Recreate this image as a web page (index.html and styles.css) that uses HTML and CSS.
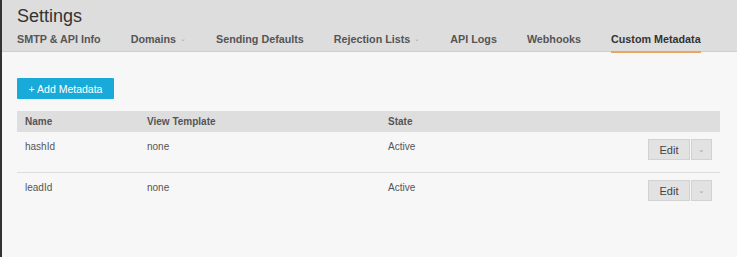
FILE: index.html
```html
<!DOCTYPE html>
<html lang="en">
<head>
    <meta charset="UTF-8">
    <title>Settings</title>
    <link rel="stylesheet" href="styles.css">
</head>
<body>
    <div class="page">
        <div class="header">
            <h1>Settings</h1>
            <ul class="tabs">
                <li>SMTP &amp; API Info</li>
                <li>Domains <span class="caret">&#8964;</span></li>
                <li>Sending Defaults</li>
                <li>Rejection Lists <span class="caret">&#8964;</span></li>
                <li>API Logs</li>
                <li>Webhooks</li>
                <li class="active">Custom Metadata</li>
            </ul>
        </div>
        <div class="content">
            <button class="btn-add">+ Add Metadata</button>
            <table class="meta-table">
                <thead>
                    <tr>
                        <th class="col-name">Name</th>
                        <th class="col-view">View Template</th>
                        <th>State</th>
                        <th></th>
                    </tr>
                </thead>
                <tbody>
                    <tr>
                        <td>hashId</td>
                        <td>none</td>
                        <td>Active</td>
                        <td class="actions">
                            <div class="btn-group">
                                <button class="btn-edit">Edit</button>
                                <button class="btn-drop">&#8964;</button>
                            </div>
                        </td>
                    </tr>
                    <tr>
                        <td>leadId</td>
                        <td>none</td>
                        <td>Active</td>
                        <td class="actions">
                            <div class="btn-group">
                                <button class="btn-edit">Edit</button>
                                <button class="btn-drop">&#8964;</button>
                            </div>
                        </td>
                    </tr>
                </tbody>
            </table>
        </div>
    </div>
</body>
</html>
```

FILE: styles.css
```css
body {
    margin: 0;
    padding: 0;
    background-color: #333;
    font-family: 'Liberation Sans', Arial, sans-serif;
    color: #555;
}

.page {
    margin-left: 2px;
    height: 257px;
    background-color: #f7f7f7;
    overflow: hidden;
}

.header {
    background-color: #dddddd;
    border-bottom: 1px solid #cfcfcf;
    padding: 5px 0 0 15px;
    box-sizing: border-box;
    height: 52px;
}

h1 {
    margin: 0;
    font-size: 18px;
    font-weight: 400;
    color: #333;
    line-height: 22px;
}

.tabs {
    list-style: none;
    margin: 6px 0 0;
    padding: 0;
    display: flex;
    gap: 30px;
}

.tabs li {
    font-size: 10.75px;
    font-weight: 700;
    color: #555;
    padding-bottom: 4px;
    border-bottom: 2px solid transparent;
    line-height: 12px;
}

.tabs li.active {
    color: #333;
    border-bottom-color: #eaa55f;
}

.caret {
    font-weight: 400;
    color: #aaa;
    font-size: 7px;
    margin-left: 1px;
    position: relative;
    top: -2px;
}

.content {
    padding: 26px 15px 0 15px;
}

.btn-add {
    display: block;
    background-color: #18aad9;
    color: #fff;
    border: none;
    border-radius: 1px;
    font-family: inherit;
    font-size: 10.5px;
    height: 21px;
    width: 97px;
    padding: 0;
    margin-bottom: 12px;
}

.meta-table {
    width: 703px;
    border-collapse: collapse;
    font-size: 10px;
}

.meta-table th {
    background-color: #dedede;
    text-align: left;
    font-weight: 700;
    color: #555;
    height: 21px;
    padding: 0 8px;
}

.meta-table .col-name {
    width: 106px;
}

.meta-table .col-view {
    width: 225px;
}

.meta-table td {
    padding: 9px 8px 0;
    height: 31px;
    vertical-align: top;
    border-bottom: 1px solid #ddd;
    color: #555;
}

.meta-table tbody tr:last-child td {
    border-bottom: none;
}

.meta-table td.actions {
    text-align: right;
    padding-top: 7px;
}

.btn-group {
    display: inline-flex;
    gap: 1px;
}

.btn-group button {
    background-color: #e2e2e2;
    border: 1px solid #d2d2d2;
    font-family: inherit;
    color: #444;
    height: 21px;
    padding: 0;
}

.btn-edit {
    width: 42px;
    font-size: 11px;
}

.btn-drop {
    width: 21px;
    font-size: 8px;
    color: #aaa !important;
}
```
